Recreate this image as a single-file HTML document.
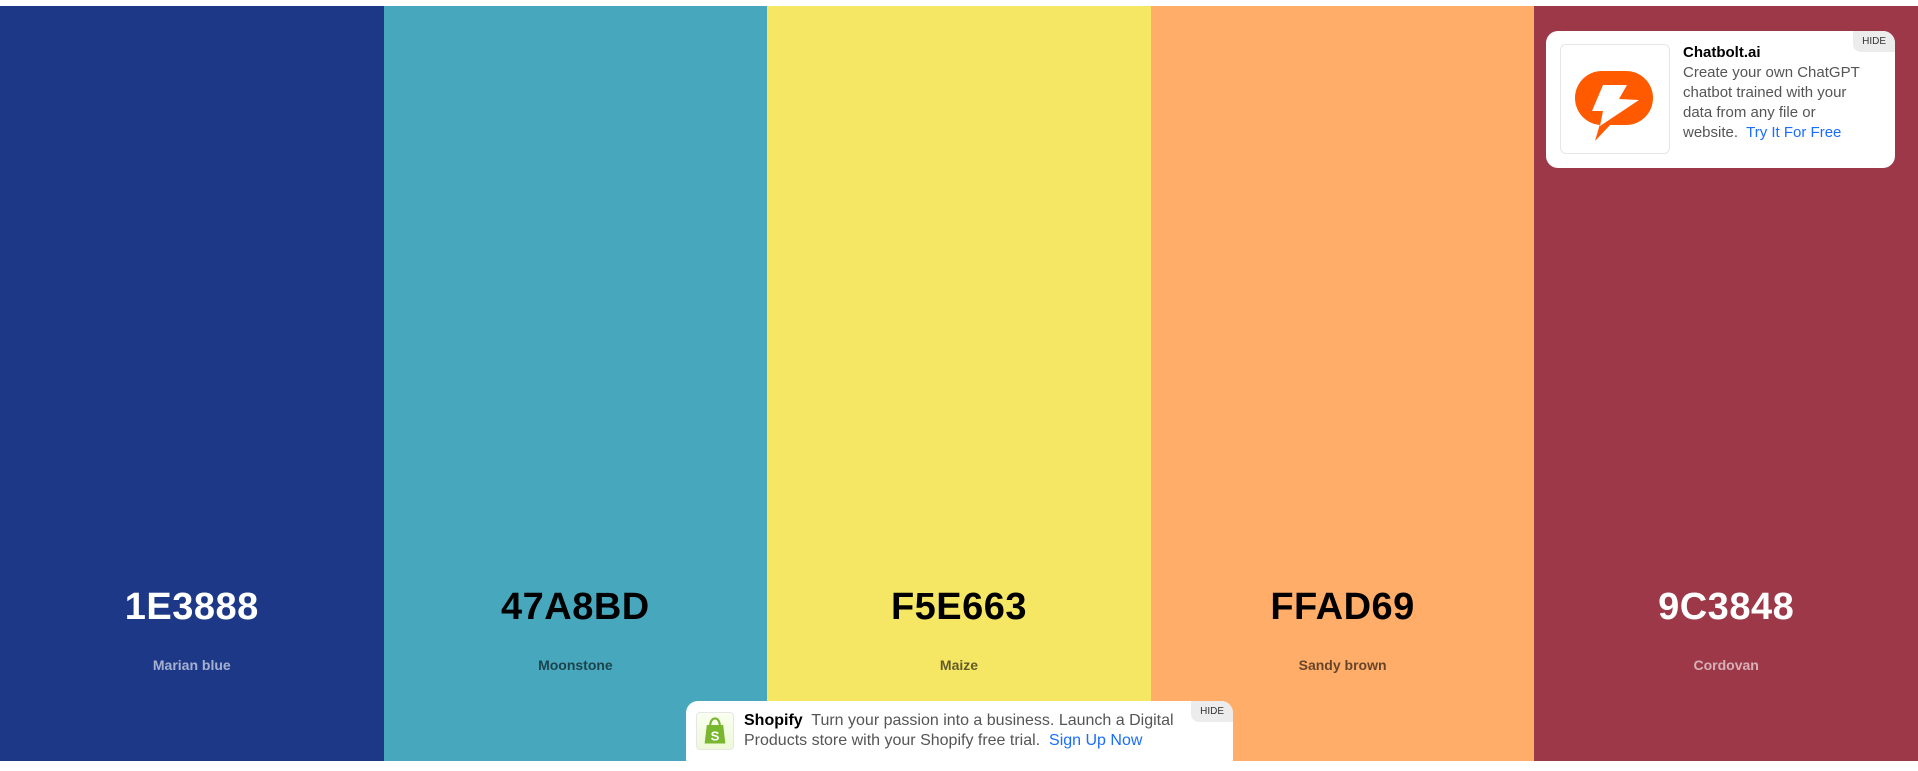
<!DOCTYPE html>
<html><head><meta charset="utf-8"><style>
*{margin:0;padding:0;box-sizing:border-box}
body{width:1918px;height:761px;overflow:hidden;background:#fff;font-family:"Liberation Sans",sans-serif;position:relative}
.cols{position:absolute;top:6px;left:0;width:1918px;height:755px;display:flex}
.c{flex:1;position:relative;text-align:center}
.hex{position:absolute;top:580px;left:0;right:0;font-size:38px;font-weight:700;letter-spacing:0.5px}
.nm{position:absolute;top:651px;left:0;right:0;font-size:14px;font-weight:700;opacity:.6}
.card{position:absolute;background:#fff;border-radius:12px;overflow:hidden}
.hide{position:absolute;top:0;right:0;background:#ececec;color:#333;font-size:10px;padding:5px 9px;border-bottom-left-radius:8px}
</style></head><body>
<div class="cols">
<div class="c" style="background:#1e3888;color:#fff"><div class="hex">1E3888</div><div class="nm">Marian blue</div></div>
<div class="c" style="background:#47a8bd;color:#000"><div class="hex">47A8BD</div><div class="nm">Moonstone</div></div>
<div class="c" style="background:#f5e663;color:#000"><div class="hex">F5E663</div><div class="nm">Maize</div></div>
<div class="c" style="background:#ffad69;color:#000"><div class="hex">FFAD69</div><div class="nm">Sandy brown</div></div>
<div class="c" style="background:#9c3848;color:#fff"><div class="hex">9C3848</div><div class="nm">Cordovan</div></div>
</div>
<div class="card" style="left:1546px;top:31px;width:349px;height:137px">
<div class="hide">HIDE</div>
<div style="position:absolute;left:14px;top:13px;width:110px;height:110px;border:1px solid #e6e6e6;border-radius:6px">
<svg width="110" height="110" viewBox="0 0 110 110" style="position:absolute;left:-1px;top:-1px"><rect x="15" y="27" width="78" height="54" rx="27" fill="#ff5a00"/><polygon points="40,80 51,80 35,97" fill="#ff5a00"/><polygon points="43,41 67,41 59,55 79,56 40,82 43,67 32,67" fill="#fff"/></svg></div>
<div style="position:absolute;left:137px;top:12px;width:180px;font-size:15px;line-height:20px;color:#555">
<div style="color:#000;font-weight:700">Chatbolt.ai</div>Create your own ChatGPT chatbot trained with your data from any file or website.&nbsp; <span style="color:#1a6dff">Try It For Free</span></div>
</div>
<div class="card" style="left:686px;top:701px;width:547px;height:70px">
<div class="hide">HIDE</div>
<div style="position:absolute;left:10px;top:11px;width:38px;height:38px;border:1px solid #e6e6e6;border-radius:4px;background:linear-gradient(#fafff0,#eef9d8)">
<svg width="36" height="36" viewBox="0 0 33 33"><path d="M9 11 L24 11 L26 28 L7 28 Z" fill="#7ab730"/><path d="M12 11 Q13 5 16.5 5 Q20 5 21 11" fill="none" stroke="#7ab730" stroke-width="2"/><text x="16.5" y="25" font-size="12" font-weight="700" fill="#fff" text-anchor="middle" font-family="Liberation Sans">S</text></svg></div>
<div style="position:absolute;left:58px;top:10px;width:450px;font-size:16px;line-height:20px;color:#555"><b style="color:#000">Shopify</b>&nbsp; Turn your passion into a business. Launch a Digital Products store with your Shopify free trial.&nbsp; <span style="color:#1a6dff">Sign Up Now</span></div>
</div>
</body></html>
